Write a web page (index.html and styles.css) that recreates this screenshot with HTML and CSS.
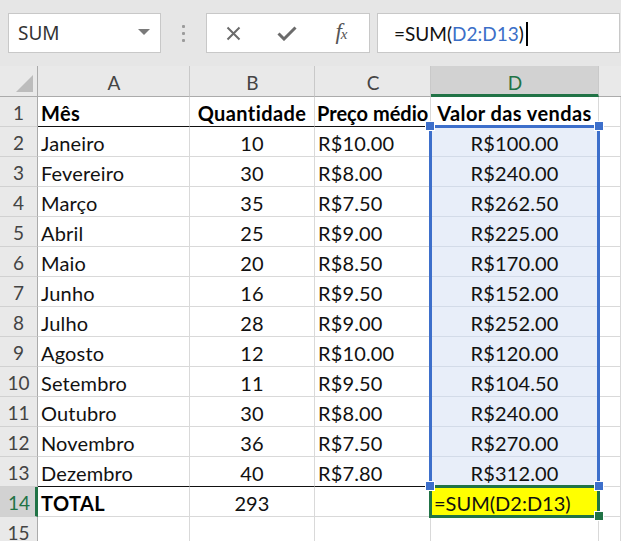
FILE: index.html
```html
<!DOCTYPE html>
<html lang="pt">
<head>
<meta charset="utf-8">
<title>SUM</title>
<link rel="stylesheet" href="styles.css">
</head>
<body>
<div class="app">
  <div class="toolbar">
    <div class="namebox">
      <span class="nb-text">SUM</span>
      <svg class="nb-arrow" width="12" height="6" viewBox="0 0 12 6"><path d="M0 0H12L6 6Z" fill="#7a7a7a"/></svg>
    </div>
    <div class="dots"><i></i><i></i><i></i></div>
    <div class="fbtns">
      <span class="fbtn"><svg width="15" height="15" viewBox="0 0 15 15"><path d="M1.5 1.5L13.5 13.5M13.5 1.5L1.5 13.5" stroke="#6b6b6b" stroke-width="2" fill="none"/></svg></span>
      <span class="fbtn"><svg width="20" height="15" viewBox="0 0 20 15"><path d="M1.5 7.5L7 13L18.5 1.5" stroke="#6b6b6b" stroke-width="3" fill="none"/></svg></span>
      <span class="fbtn fx">f<span class="fx-x">x</span></span>
    </div>
    <div class="finput">=SUM(<span class="ref">D2:D13</span>)<span class="caret"></span></div>
  </div>

  <div class="sheet">
    <div class="c corner"><span class="tri"></span></div>
    <div class="c ch">A</div>
    <div class="c ch">B</div>
    <div class="c ch">C</div>
    <div class="c ch ch-sel">D</div>
    <div class="c ch ch-e"></div>

    <div class="c rh">1</div>
    <div class="c b thick">Mês</div>
    <div class="c b ctr thick">Quantidade</div>
    <div class="c b narrow thick">Preço médio</div>
    <div class="c b ctr thick">Valor das vendas</div>
    <div class="c"></div>

    <div class="c rh">2</div>
    <div class="c">Janeiro</div>
    <div class="c ctr">10</div>
    <div class="c">R$10.00</div>
    <div class="c ctr sel">R$100.00</div>
    <div class="c"></div>

    <div class="c rh">3</div>
    <div class="c">Fevereiro</div>
    <div class="c ctr">30</div>
    <div class="c">R$8.00</div>
    <div class="c ctr sel">R$240.00</div>
    <div class="c"></div>

    <div class="c rh">4</div>
    <div class="c">Março</div>
    <div class="c ctr">35</div>
    <div class="c">R$7.50</div>
    <div class="c ctr sel">R$262.50</div>
    <div class="c"></div>

    <div class="c rh">5</div>
    <div class="c">Abril</div>
    <div class="c ctr">25</div>
    <div class="c">R$9.00</div>
    <div class="c ctr sel">R$225.00</div>
    <div class="c"></div>

    <div class="c rh">6</div>
    <div class="c">Maio</div>
    <div class="c ctr">20</div>
    <div class="c">R$8.50</div>
    <div class="c ctr sel">R$170.00</div>
    <div class="c"></div>

    <div class="c rh">7</div>
    <div class="c">Junho</div>
    <div class="c ctr">16</div>
    <div class="c">R$9.50</div>
    <div class="c ctr sel">R$152.00</div>
    <div class="c"></div>

    <div class="c rh">8</div>
    <div class="c">Julho</div>
    <div class="c ctr">28</div>
    <div class="c">R$9.00</div>
    <div class="c ctr sel">R$252.00</div>
    <div class="c"></div>

    <div class="c rh">9</div>
    <div class="c">Agosto</div>
    <div class="c ctr">12</div>
    <div class="c">R$10.00</div>
    <div class="c ctr sel">R$120.00</div>
    <div class="c"></div>

    <div class="c rh">10</div>
    <div class="c">Setembro</div>
    <div class="c ctr">11</div>
    <div class="c">R$9.50</div>
    <div class="c ctr sel">R$104.50</div>
    <div class="c"></div>

    <div class="c rh">11</div>
    <div class="c">Outubro</div>
    <div class="c ctr">30</div>
    <div class="c">R$8.00</div>
    <div class="c ctr sel">R$240.00</div>
    <div class="c"></div>

    <div class="c rh">12</div>
    <div class="c">Novembro</div>
    <div class="c ctr">36</div>
    <div class="c">R$7.50</div>
    <div class="c ctr sel">R$270.00</div>
    <div class="c"></div>

    <div class="c rh">13</div>
    <div class="c thick">Dezembro</div>
    <div class="c ctr thick">40</div>
    <div class="c thick">R$7.80</div>
    <div class="c ctr sel thick">R$312.00</div>
    <div class="c"></div>

    <div class="c rh rh-sel">14</div>
    <div class="c b">TOTAL</div>
    <div class="c ctr">293</div>
    <div class="c"></div>
    <div class="c yel">=SUM(D2:D13)</div>
    <div class="c"></div>

    <div class="c rh">15</div>
    <div class="c"></div>
    <div class="c"></div>
    <div class="c"></div>
    <div class="c"></div>
    <div class="c"></div>

    <div class="range-box"></div>
    <div class="active-box"></div>
    <span class="handle h-tl"></span>
    <span class="handle h-tr"></span>
    <span class="handle h-bl"></span>
    <span class="handle h-br"></span>
    <span class="handle fill-handle"></span>
  </div>
</div>
</body>
</html>
```

FILE: styles.css
```css
* { box-sizing: border-box; }
html, body {
  margin: 0;
  padding: 0;
  width: 621px;
  height: 541px;
  overflow: hidden;
  background: #ffffff;
}
.app {
  width: 621px;
  height: 541px;
  overflow: hidden;
  font-family: Lato, "Liberation Sans", sans-serif;
}

/* ---------- formula bar ---------- */
.toolbar {
  height: 66px;
  background: #e6e6e6;
  display: flex;
  align-items: flex-start;
  padding: 13px 0 0 8px;
}
.namebox {
  width: 153px;
  height: 40px;
  background: #fff;
  border: 1px solid #c8c8c8;
  display: flex;
  align-items: center;
  justify-content: space-between;
  padding: 0 10px 0 9px;
  font-family: "Noto Sans", "Open Sans", sans-serif;
  font-size: 19px;
  color: #333;
}
.nb-arrow { margin-top: -3px; }
.dots {
  width: 45px;
  height: 40px;
  display: flex;
  flex-direction: column;
  align-items: center;
  justify-content: center;
  gap: 4px;
}
.dots i {
  display: block;
  width: 3px;
  height: 3px;
  border-radius: 1px;
  background: #9b9b9b;
}
.fbtns {
  width: 164px;
  height: 40px;
  background: #fff;
  border: 1px solid #c8c8c8;
  display: flex;
  align-items: center;
}
.fbtn {
  width: 54px;
  height: 38px;
  display: flex;
  align-items: center;
  justify-content: center;
}
.fbtn:first-child { width: 53px; }
.fx {
  font-family: "Liberation Serif", serif;
  font-style: italic;
  font-size: 23px;
  color: #555;
  padding-bottom: 3px;
  letter-spacing: -1px;
}
.fx-x { font-size: 15px; position: relative; top: 3px; }
.finput {
  margin-left: 7px;
  width: 243px;
  height: 40px;
  background: #fff;
  border: 1px solid #c8c8c8;
  display: flex;
  align-items: center;
  padding: 1px 0 0 16px;
  font-size: 19px;
  color: #111;
  white-space: nowrap;
}
.ref { color: #3b6fc8; }
.caret {
  display: inline-block;
  width: 2px;
  height: 24px;
  background: #000;
  margin-left: 2px;
}

/* ---------- sheet ---------- */
.sheet {
  position: relative;
  display: grid;
  grid-template-columns: 38px 152px 125px 116px 168px 22px;
  grid-template-rows: 31px repeat(15, 30px);
  font-size: 20px;
  letter-spacing: 0.15px;
  color: #111;
}
.c {
  border-right: 1px solid #d9d9d9;
  border-bottom: 1px solid #d9d9d9;
  padding: 2px 2px 0 3px;
  display: flex;
  align-items: center;
  white-space: nowrap;
  overflow: hidden;
}
.ctr { justify-content: center; padding-left: 2px; }
.b { font-weight: 700; color: #000; letter-spacing: 0.4px; }
.b.narrow { letter-spacing: 0; padding-left: 2px; padding-right: 0; }
.thick { border-bottom-color: #111; }
.sel { background: #e8eef9; border-bottom-color: #d3dbe8; }
.sel.thick { border-bottom-color: #111; }
.yel { background: #ffff00; letter-spacing: 0; }

.ch, .rh, .corner {
  background: #e9e9e9;
  color: #444;
  justify-content: center;
  font-size: 19px;
  letter-spacing: 0;
}
.ch {
  border-right-color: #c9c9c9;
  border-bottom-color: #ababab;
  padding-top: 3px;
}
.ch-sel {
  background: #d2d2d2;
  border-bottom: 3px solid #217346;
  padding-top: 4px;
  color: #217346;
}
.ch-e { border-right: 0; }
.rh {
  border-right-color: #ababab;
  border-bottom-color: #d1d1d1;
  padding-left: 2px;
  padding-top: 1px;
}
.rh-sel {
  background: #d2d2d2;
  border-right: 3px solid #217346;
  color: #217346;
  padding-left: 5px;
}
.corner {
  position: relative;
  border-right-color: #ababab;
  border-bottom-color: #ababab;
}
.tri {
  position: absolute;
  right: 4px;
  bottom: 4px;
  width: 0;
  height: 0;
  border-left: 17px solid transparent;
  border-bottom: 17px solid #bcbcbc;
}

/* ---------- selection overlays ---------- */
.range-box {
  position: absolute;
  left: 429px;
  top: 59px;
  width: 171px;
  height: 363px;
  border: 3px solid #3d6fcb;
  pointer-events: none;
}
.active-box {
  position: absolute;
  left: 429px;
  top: 419px;
  width: 171px;
  height: 33px;
  border: 3px solid #217346;
}
.handle {
  position: absolute;
  width: 8px;
  height: 8px;
  background: #3d6fcb;
  box-shadow: 0 0 0 1px #fff;
}
.h-tl { left: 426px; top: 56px; }
.h-tr { left: 595px; top: 56px; }
.h-bl { left: 426px; top: 416px; }
.h-br { left: 595px; top: 416px; }
.fill-handle { left: 595px; top: 446px; background: #217346; }
```
